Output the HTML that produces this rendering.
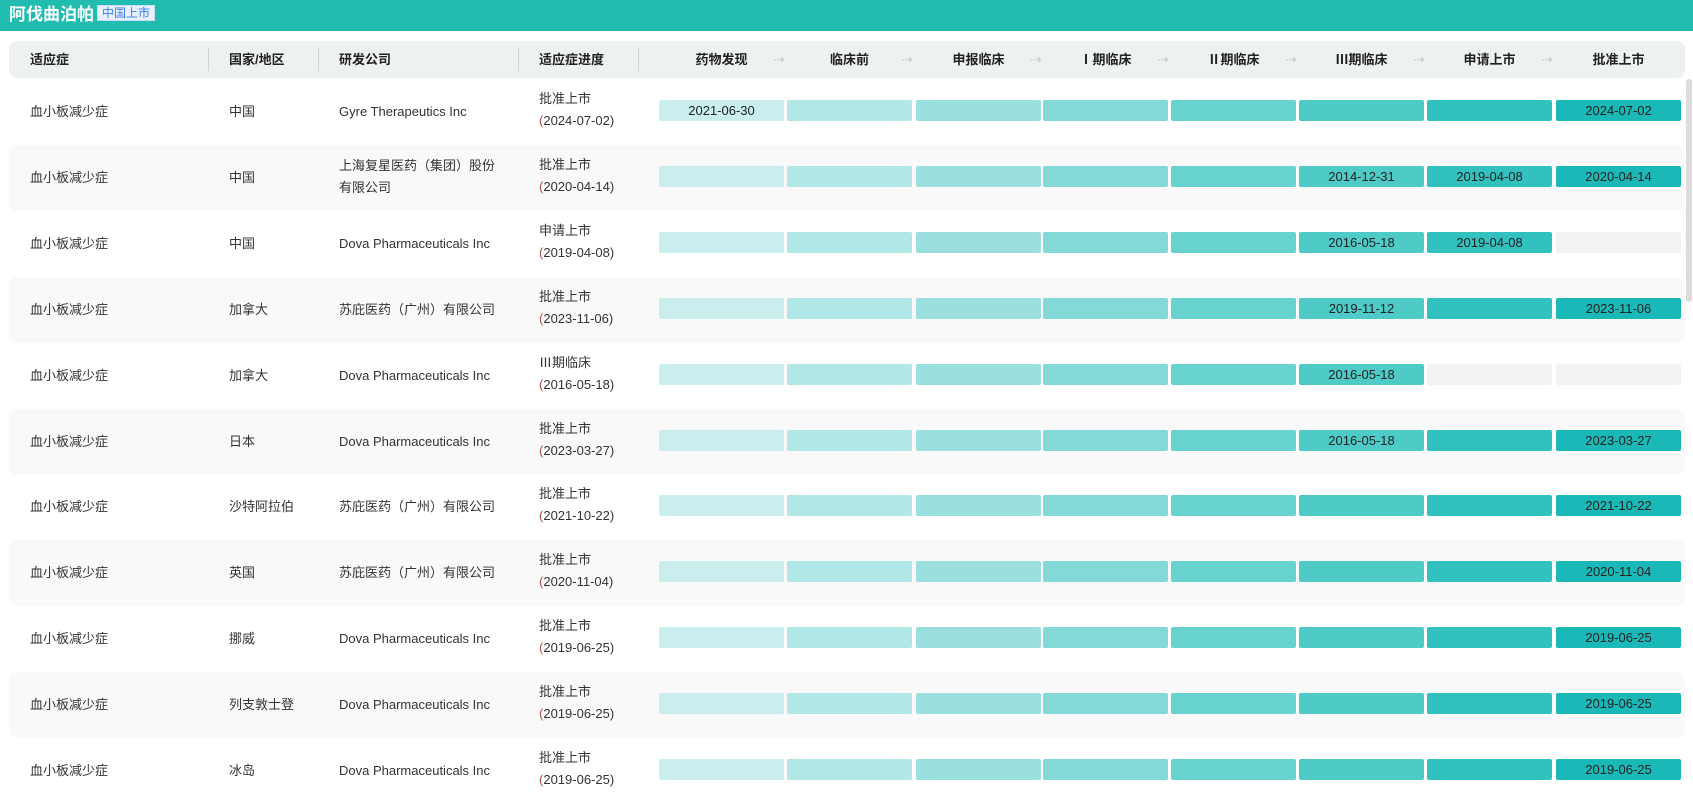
<!DOCTYPE html>
<html><head><meta charset="utf-8"><style>
*{margin:0;padding:0;box-sizing:border-box}
body{width:1693px;height:798px;overflow:hidden;background:#fff;font-family:"Liberation Sans","Noto Sans CJK SC",sans-serif;color:#333;position:relative}
.top{position:absolute;left:0;top:0;width:1693px;height:31px;background:#1fbcaf}
.title{position:absolute;left:9px;top:4px;font-size:17px;font-weight:bold;color:#fff;line-height:22px}
.badge{position:absolute;left:97px;top:5px;height:16px;padding:0 4px;background:#e8f0fe;color:#3a7ff0;font-size:12px;line-height:14px;text-align:center;border:1px solid #c9dcfb;white-space:nowrap}
.hd{position:absolute;left:9px;top:41px;width:1676px;height:37px;background:#eef1f2;border-radius:8px;font-size:13px;font-weight:bold;color:#222}
.hd span{position:absolute;top:10px;line-height:17px}
.dv{position:absolute;top:7px;width:1px;height:23px;background:#cfd6d6}
.ar{position:absolute;top:9px;color:#c8cccc;font-size:14px;font-weight:normal}
.row{position:absolute;left:9px;width:1676px;height:66px;font-size:13px;color:#333;border-radius:8px}
.row.g{background:#f9f9f9}
.c{position:absolute;line-height:22px}
.bar{position:absolute;top:21px;width:125px;height:21px;border-radius:2px;font-size:13px;line-height:21px;text-align:center;color:#222}
.sb{position:absolute;left:1686px;top:79px;width:6px;height:223px;background:#dcdcdc;border-radius:3px}
</style></head><body>
<div class="top"><div class="title">阿伐曲泊帕</div><div class="badge">中国上市</div></div>
<div class="hd">
<span style="left:21px">适应症</span><div class="dv" style="left:199px"></div>
<span style="left:220px">国家/地区</span><div class="dv" style="left:309px"></div>
<span style="left:330px">研发公司</span><div class="dv" style="left:509px"></div>
<span style="left:530px">适应症进度</span><div class="dv" style="left:629px"></div>
<span style="left:650px;width:125px;text-align:center">药物发现</span><span class="ar" style="left:764px">⇢</span>
<span style="left:778px;width:125px;text-align:center">临床前</span><span class="ar" style="left:892px">⇢</span>
<span style="left:907px;width:125px;text-align:center">申报临床</span><span class="ar" style="left:1021px">⇢</span>
<span style="left:1034px;width:125px;text-align:center">Ⅰ期临床</span><span class="ar" style="left:1148px">⇢</span>
<span style="left:1162px;width:125px;text-align:center">Ⅱ期临床</span><span class="ar" style="left:1276px">⇢</span>
<span style="left:1290px;width:125px;text-align:center">Ⅲ期临床</span><span class="ar" style="left:1404px">⇢</span>
<span style="left:1418px;width:125px;text-align:center">申请上市</span><span class="ar" style="left:1532px">⇢</span>
<span style="left:1547px;width:125px;text-align:center">批准上市</span>
</div>
<div id="rows"></div>
<div class="sb"></div>
<script>
var data=[
["中国","Gyre Therapeutics Inc","批准上市","2024-07-02",8,{0:"2021-06-30",7:"2024-07-02"}],
["中国","上海复星医药（集团）股份<br>有限公司","批准上市","2020-04-14",8,{5:"2014-12-31",6:"2019-04-08",7:"2020-04-14"}],
["中国","Dova Pharmaceuticals Inc","申请上市","2019-04-08",7,{5:"2016-05-18",6:"2019-04-08"}],
["加拿大","苏庇医药（广州）有限公司","批准上市","2023-11-06",8,{5:"2019-11-12",7:"2023-11-06"}],
["加拿大","Dova Pharmaceuticals Inc","Ⅲ期临床","2016-05-18",6,{5:"2016-05-18"}],
["日本","Dova Pharmaceuticals Inc","批准上市","2023-03-27",8,{5:"2016-05-18",7:"2023-03-27"}],
["沙特阿拉伯","苏庇医药（广州）有限公司","批准上市","2021-10-22",8,{7:"2021-10-22"}],
["英国","苏庇医药（广州）有限公司","批准上市","2020-11-04",8,{7:"2020-11-04"}],
["挪威","Dova Pharmaceuticals Inc","批准上市","2019-06-25",8,{7:"2019-06-25"}],
["列支敦士登","Dova Pharmaceuticals Inc","批准上市","2019-06-25",8,{7:"2019-06-25"}],
["冰岛","Dova Pharmaceuticals Inc","批准上市","2019-06-25",8,{7:"2019-06-25"}]];
var cols=["#c9eeed","#b2e7e7","#9be0df","#82d9d8","#68d2cf","#4ecac7","#33c1c0","#1ab9b7"];
var bx=[650,778,907,1034,1162,1290,1418,1547];
var h="";
data.forEach(function(d,i){
 var top=79+i*65.9;
 h+='<div class="row'+(i%2?' g':'')+'" style="top:'+top+'px">';
 h+='<div class="c" style="left:21px;top:22px">血小板减少症</div>';
 h+='<div class="c" style="left:220px;top:22px">'+d[0]+'</div>';
 var two=d[1].indexOf("<br>")>0;
 h+='<div class="c" style="left:330px;top:'+(two?10:22)+'px">'+d[1]+'</div>';
 h+='<div class="c" style="left:530px;top:9px">'+d[2]+'<br><span style="color:#b0524a">(</span>'+d[3]+')</div>';
 for(var k=0;k<8;k++){
  var bg=k<d[4]?cols[k]:"#f2f2f2";
  h+='<div class="bar" style="left:'+bx[k]+'px;background:'+bg+'">'+(d[5][k]||"")+'</div>';
 }
 h+='</div>';
});
document.getElementById("rows").innerHTML=h;
</script>
</body></html>
